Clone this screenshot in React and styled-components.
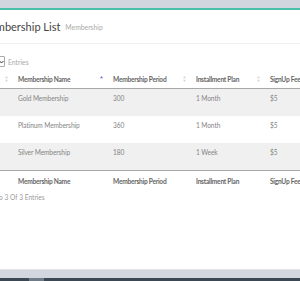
import React from 'react';
import styled, { createGlobalStyle } from 'styled-components';

const GlobalStyle = createGlobalStyle`
  html, body {
    margin: 0;
    padding: 0;
    background: #d2d6de;
    overflow: hidden;
  }
`;

const Page = styled.div`
  width: 300px;
  height: 281px;
  display: flex;
  flex-direction: column;
  background: #d2d6de;
  font-family: Lato, "Open Sans", sans-serif;
  overflow: hidden;
`;

const TopGap = styled.div`
  height: 8px;
  flex: none;
`;

const Box = styled.div`
  height: 259px;
  flex: none;
  margin-left: -20px;
  width: 340px;
  background: #fff;
  border-top: 2px solid #48c0aa;
  border-bottom: 1px solid #e3e3e3;
`;

const BoxHeader = styled.div`
  height: 33px;
  display: flex;
  align-items: center;
  gap: 5px;
  padding-left: 0;
  border-bottom: 1px solid #f0f0f0;
`;

const Title = styled.h1`
  margin: 0;
  font-size: 11px;
  font-weight: 400;
  color: #444;
`;

const Small = styled.small`
  font-size: 6.8px;
  color: #aaa;
  padding-top: 1px;
`;

const BoxBody = styled.div`
  padding: 12px 0 0 17px;
`;

const LengthRow = styled.div`
  display: flex;
  align-items: center;
  gap: 3px;
  height: 11px;
  font-size: 6.8px;
  color: #aaa;
`;

const Select = styled.div`
  width: 6px;
  height: 9px;
  border: 1px solid #aaa;
  border-radius: 1px;
  display: flex;
  align-items: center;
  justify-content: center;
`;

const Table = styled.table`
  margin-top: 2px;
  border-collapse: collapse;
  table-layout: fixed;
  width: 320px;
  font-size: 6.6px;
`;

const HeadCell = styled.th`
  text-align: left;
  padding: 0;
  height: 19px;
  font-weight: 700;
  color: #666;
  letter-spacing: -0.25px;
  border-bottom: 1px solid #a8a8a8;
`;

const FootCell = styled(HeadCell)`
  border-bottom: none;
  border-top: 1px solid #a8a8a8;
`;

const HeadInner = styled.div`
  display: flex;
  align-items: center;
  justify-content: space-between;
  padding: 0 4px 0 6px;
  line-height: 8px;
  white-space: nowrap;
`;

const Row = styled.tr`
  background: ${p => (p.$striped ? '#f0f0f0' : '#fff')};
`;

const Cell = styled.td`
  padding: 5px 6px 14px;
  height: 8px;
  line-height: 8px;
  color: #858585;
  letter-spacing: -0.1px;
  white-space: nowrap;
  vertical-align: top;
`;

const Info = styled.div`
  margin-top: 3px;
  margin-left: -1px;
  font-size: 6.6px;
  color: #9a9a9a;
`;

const BottomGray = styled.div`
  height: 8px;
  flex: none;
`;

const Taskbar = styled.div`
  flex: 1;
  background: #3b4753;
  display: flex;
  padding-left: 29px;
`;

const TaskItem = styled.div`
  width: 15px;
  background: #6f7c88;
`;

function SortIcon({ active }) {
  return (
    <svg width="3" height="6" viewBox="0 0 3 6">
      <path d="M1.5 0 L3 2.2 L0 2.2 Z" fill={active ? '#6b70d6' : '#d6d6d6'} />
      {!active && <path d="M1.5 6 L3 3.8 L0 3.8 Z" fill="#d6d6d6" />}
    </svg>
  );
}

const columns = ['', 'Membership Name', 'Membership Period', 'Installment Plan', 'SignUp Fee'];
const widths = [15, 95, 83, 74, 53];

const rows = [
  ['Gold Membership', '300', '1 Month', '$5'],
  ['Platinum Membership', '360', '1 Month', '$5'],
  ['Silver Membership', '180', '1 Week', '$5'],
];

export default function App() {
  return (
    <Page>
      <GlobalStyle />
      <TopGap />
      <Box>
        <BoxHeader>
          <Title>Membership List</Title>
          <Small>Membership</Small>
        </BoxHeader>
        <BoxBody>
          <LengthRow>
            <Select>
              <svg width="5" height="4" viewBox="0 0 5 4">
                <path d="M0.5 1 L2.5 3 L4.5 1" stroke="#333" strokeWidth="1" fill="none" />
              </svg>
            </Select>
            Entries
          </LengthRow>
          <Table>
            <colgroup>
              {widths.map((w, i) => <col key={i} style={{ width: w }} />)}
            </colgroup>
            <thead>
              <tr>
                {columns.map((c, i) => (
                  <HeadCell key={i}>
                    <HeadInner>
                      <span>{c}</span>
                      {i < 4 && <SortIcon active={i === 1} />}
                    </HeadInner>
                  </HeadCell>
                ))}
              </tr>
            </thead>
            <tbody>
              {rows.map((r, i) => (
                <Row key={i} $striped={i !== 1}>
                  <Cell />
                  {r.map((v, j) => <Cell key={j}>{v}</Cell>)}
                </Row>
              ))}
            </tbody>
            <tfoot>
              <tr>
                {columns.map((c, i) => (
                  <FootCell key={i}>
                    <HeadInner>
                      <span>{c}</span>
                    </HeadInner>
                  </FootCell>
                ))}
              </tr>
            </tfoot>
          </Table>
          <Info>To 3 Of 3 Entries</Info>
        </BoxBody>
      </Box>
      <BottomGray />
      <Taskbar>
        <TaskItem />
      </Taskbar>
    </Page>
  );
}
